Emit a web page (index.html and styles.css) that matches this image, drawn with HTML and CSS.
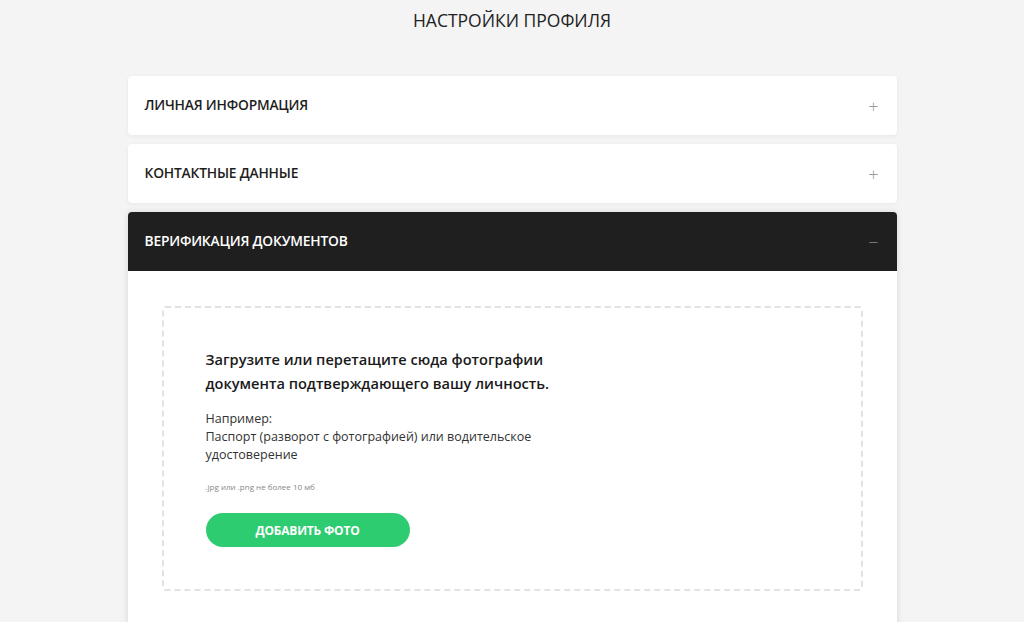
FILE: index.html
```html
<!DOCTYPE html>
<html lang="ru">
<head>
    <meta charset="utf-8">
    <title>Настройки профиля</title>
    <link rel="stylesheet" href="styles.css">
</head>
<body>
    <div class="page">
        <h1 class="page-title">Настройки профиля</h1>
        <div class="accordion">
            <div class="panel">
                <div class="panel-head">
                    <span class="panel-title">Личная информация</span>
                    <span class="panel-toggle">+</span>
                </div>
            </div>
            <div class="panel">
                <div class="panel-head">
                    <span class="panel-title">Контактные данные</span>
                    <span class="panel-toggle">+</span>
                </div>
            </div>
            <div class="panel panel-open">
                <div class="panel-head">
                    <span class="panel-title">Верификация документов</span>
                    <span class="panel-toggle">&minus;</span>
                </div>
                <div class="panel-body">
                    <div class="dropzone">
                        <p class="drop-title">Загрузите или перетащите сюда фотографии<br>документа подтверждающего вашу личность.</p>
                        <p class="drop-text">Например:<br>Паспорт (разворот с фотографией) или водительское<br>удостоверение</p>
                        <p class="drop-note">.jpg или .png не более 10 мб</p>
                        <button class="btn-add" type="button">Добавить фото</button>
                    </div>
                </div>
            </div>
        </div>
    </div>
</body>
</html>
```

FILE: styles.css
```css
body {
    margin: 0;
    background: #f4f4f4;
    font-family: "Open Sans", "Noto Sans", Arial, sans-serif;
    color: #1e1e1e;
}
.page {
    width: 769px;
    margin: 0 auto;
    padding-top: 9px;
}
.page-title {
    margin: 0 0 45px;
    font-size: 17.5px;
    font-weight: 400;
    line-height: 22px;
    text-align: center;
    text-transform: uppercase;
    color: #222;
}
.accordion {
    display: flex;
    flex-direction: column;
    gap: 9px;
}
.panel {
    background: #fff;
    border-radius: 4px;
    box-shadow: 0 1px 4px rgba(0, 0, 0, 0.06);
    overflow: hidden;
}
.panel-head {
    height: 59px;
    padding: 0 17px;
    display: flex;
    align-items: center;
    justify-content: space-between;
}
.panel-title {
    font-size: 13.8px;
    font-weight: 600;
    text-transform: uppercase;
    letter-spacing: -0.2px;
    color: #1e1e1e;
    padding-bottom: 2px;
}
.panel-toggle {
    font-size: 18px;
    font-weight: 300;
    color: #9a9a9a;
    line-height: 1;
    padding-right: 1px;
}
.panel-open {
    border-radius: 4px 4px 0 0;
    box-shadow: 0 0 6px rgba(0, 0, 0, 0.12);
}
.panel-open .panel-head {
    background: #1f1f1f;
}
.panel-open .panel-title {
    color: #fff;
}
.panel-open .panel-toggle {
    color: #8a8a8a;
}
.panel-body {
    padding: 35px 34px 40px 34px;
}
.dropzone {
    box-sizing: border-box;
    height: 285px;
    border: 2px dashed #e2e2e2;
    border-radius: 3px;
    padding: 39px 0 0 42px;
}
.drop-title {
    margin: 0 0 15px;
    font-size: 14.6px;
    font-weight: 600;
    line-height: 24px;
    color: #1a1a1a;
}
.drop-text {
    margin: 0 0 17px;
    font-size: 12.5px;
    line-height: 18px;
    color: #333;
}
.drop-note {
    margin: 0 0 20px;
    font-size: 8px;
    line-height: 12px;
    color: #888;
}
.btn-add {
    width: 204px;
    height: 34px;
    border: none;
    border-radius: 17px;
    background: #2ecc71;
    color: #fff;
    font-family: inherit;
    font-size: 12px;
    font-weight: 700;
    text-transform: uppercase;
    letter-spacing: -0.2px;
    cursor: pointer;
}
```
